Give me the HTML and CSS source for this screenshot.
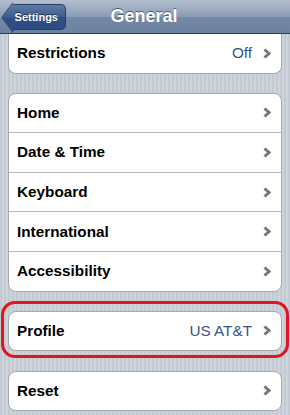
FILE: index.html
```html
<!DOCTYPE html>
<html>
<head>
<meta charset="utf-8">
<link rel="stylesheet" href="styles.css">
</head>
<body>
<div class="screen">
  <header class="nav">
    <div class="back"><span>Settings</span></div>
    <div class="title">General</div>
  </header>

  <div class="group group-cut">
    <div class="row"><span class="label">Restrictions</span><span class="value">Off</span><svg class="chev" viewBox="0 0 8 11"><polyline points="1.5,1.5 6,5.5 1.5,9.5"/></svg></div>
  </div>

  <div class="group">
    <div class="row"><span class="label">Home</span><svg class="chev" viewBox="0 0 8 11"><polyline points="1.5,1.5 6,5.5 1.5,9.5"/></svg></div>
    <div class="row"><span class="label">Date &amp; Time</span><svg class="chev" viewBox="0 0 8 11"><polyline points="1.5,1.5 6,5.5 1.5,9.5"/></svg></div>
    <div class="row"><span class="label">Keyboard</span><svg class="chev" viewBox="0 0 8 11"><polyline points="1.5,1.5 6,5.5 1.5,9.5"/></svg></div>
    <div class="row"><span class="label">International</span><svg class="chev" viewBox="0 0 8 11"><polyline points="1.5,1.5 6,5.5 1.5,9.5"/></svg></div>
    <div class="row"><span class="label">Accessibility</span><svg class="chev" viewBox="0 0 8 11"><polyline points="1.5,1.5 6,5.5 1.5,9.5"/></svg></div>
  </div>

  <div class="highlight">
    <div class="group group-single">
      <div class="row"><span class="label">Profile</span><span class="value">US AT&amp;T</span><svg class="chev" viewBox="0 0 8 11"><polyline points="1.5,1.5 6,5.5 1.5,9.5"/></svg></div>
    </div>
  </div>

  <div class="group group-single">
    <div class="row"><span class="label">Reset</span><svg class="chev" viewBox="0 0 8 11"><polyline points="1.5,1.5 6,5.5 1.5,9.5"/></svg></div>
  </div>
</div>
</body>
</html>
```

FILE: styles.css
```css
* { box-sizing: border-box; }
html, body {
  margin: 0;
  padding: 0;
}
body {
  width: 290px;
  height: 415px;
  overflow: hidden;
  font-family: "Liberation Sans", Arial, Helvetica, sans-serif;
  background: repeating-linear-gradient(90deg, #c3cad2 0, #c3cad2 2px, #ced4db 2px, #ced4db 4px);
}
.screen {
  display: flex;
  flex-direction: column;
}
.nav {
  height: 34px;
  display: flex;
  align-items: center;
  position: relative;
  background: linear-gradient(#b3bfcf 0%, #8a9cb5 50%, #7489a6 51%, #6b82a0 100%);
  border-bottom: 1px solid #2f3a4c;
}
.back {
  height: 26px;
  position: relative;
  display: flex;
  align-items: center;
  justify-content: flex-end;
  padding-right: 8px;
  border-radius: 5px;
  background: linear-gradient(#5f7ba6 0%, #3c5d91 50%, #2e4f84 51%, #2d4d82 100%);
  border: 1px solid #2b3d5e;
  border-left: none;
  margin-left: 12px;
  width: 54px;
  border-top-left-radius: 0;
  border-bottom-left-radius: 0;
}
.back::before {
  content: "";
  position: absolute;
  left: -9px;
  top: 3px;
  width: 18px;
  height: 18px;
  transform: rotate(45deg) skew(8deg, 8deg);
  background: linear-gradient(135deg, #5f7ba6 0%, #3c5d91 50%, #2e4f84 51%, #2d4d82 100%);
  border-left: 1px solid #2b3d5e;
  border-bottom: 1px solid #2b3d5e;
  border-radius: 0 0 0 4px;
}
.back span {
  position: relative;
  color: #fff;
  font-weight: bold;
  font-size: 11px;
  text-shadow: 0 -1px 0 #1d2c47;
  margin-right: -1px;
}
.title {
  position: absolute;
  left: 0;
  right: 0;
  text-align: center;
  color: #fff;
  font-weight: bold;
  font-size: 18px;
  text-shadow: 0 -1px 0 #4a5a72;
  pointer-events: none;
  margin-right: 2px;
}
.group {
  margin: 0 8px;
  background: #fff;
  border: 1px solid #a4a9b0;
  border-radius: 8px;
  display: flex;
  flex-direction: column;
}
.group-cut {
  border-top: none;
  border-radius: 0 0 8px 8px;
  margin-bottom: 19px;
}
.group-cut .row { height: 36px; }
.row {
  height: 39.6px;
  display: flex;
  align-items: center;
  padding: 0 10px 0 8px;
  border-top: 1px solid #b6b8bc;
}
.row:first-child {
  border-top: none;
  height: 38.6px;
}
.label {
  flex: 1;
  font-weight: bold;
  font-size: 15.3px;
  color: #000;
}
.value {
  font-size: 15.3px;
  color: #385487;
  margin-right: 11px;
}
.chev {
  width: 8px;
  height: 11px;
  flex: none;
}
.chev polyline {
  fill: none;
  stroke: #767676;
  stroke-width: 3;
  stroke-linecap: butt;
  stroke-linejoin: miter;
}
.highlight {
  margin: 9px 1px 13px;
  border: 3px solid #e2141d;
  border-radius: 14px;
  padding: 7px 4px 4px;
}
.highlight .group { margin: 0; }
.group-single .row { height: 38px; }
```
